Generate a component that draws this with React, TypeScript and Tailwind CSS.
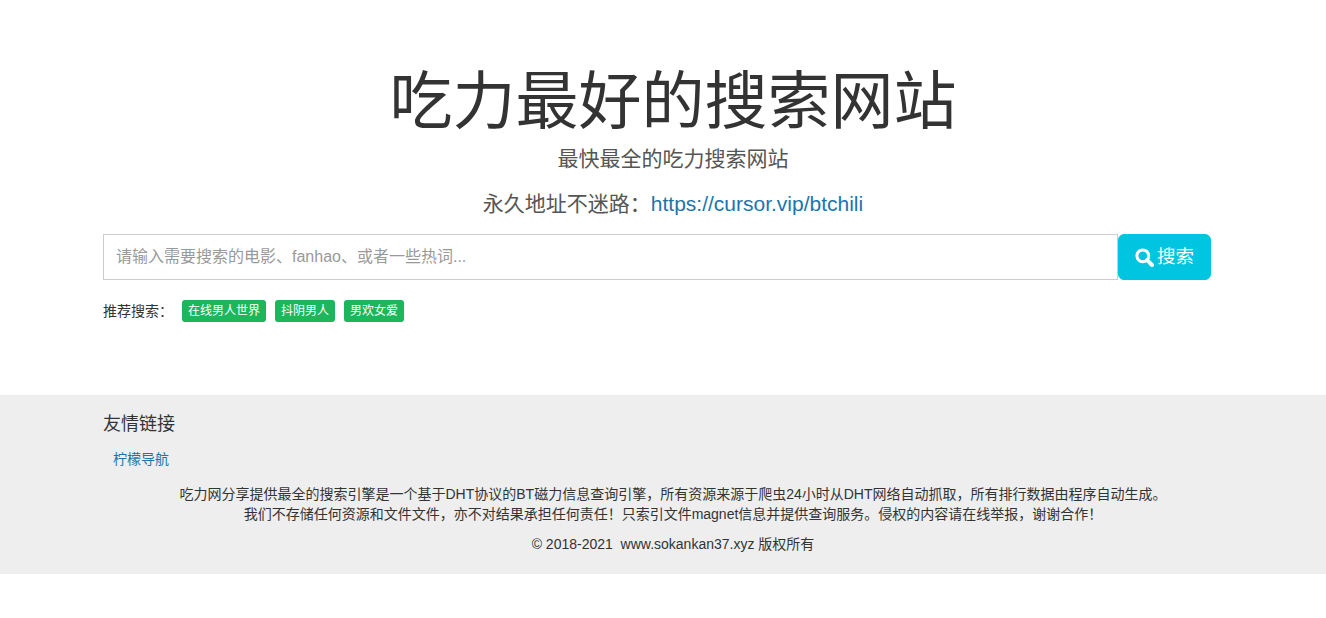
const tags = ['在线男人世界', '抖阴男人', '男欢女爱']

function SearchIcon() {
  return (
    <svg width="19" height="19" viewBox="0 0 19 19" fill="none" className="shrink-0">
      <circle cx="7.8" cy="7.8" r="5.9" stroke="white" strokeWidth="3" />
      <path d="M12.2 12.2L17 17" stroke="white" strokeWidth="4" strokeLinecap="round" />
    </svg>
  )
}

export default function App() {
  return (
    <div className="min-h-[618px] bg-white font-['Liberation_Sans','Noto_Sans_CJK_SC',sans-serif] text-[14px] text-[#333]">
      <div className="ml-[103px] w-[1140px]">
        <div className="pt-[63px] text-center">
          <h1 className="text-[63px] leading-[76px] font-normal">吃力最好的搜索网站</h1>
          <p className="mt-[3px] text-[21px] leading-[34px] text-[#555]">最快最全的吃力搜索网站</p>
          <p className="mt-[11px] text-[21px] leading-[34px] text-[#555]">
            永久地址不迷路：
            <a href="#" className="text-[#1b75ac]">https://cursor.vip/btchili</a>
          </p>
        </div>

        <div className="mt-[13px] flex h-[46px] w-[1108px]">
          <input
            placeholder="请输入需要搜索的电影、fanhao、或者一些热词..."
            className="h-full w-[1015px] border border-[#ccc] bg-white px-3 text-[16px] outline-none placeholder:text-[#999]"
          />
          <button className="flex h-full flex-1 items-center justify-center gap-[3px] rounded-md border border-[#00c5e0] bg-[#00c5e0] text-[18.5px] text-white">
            <SearchIcon />
            搜索
          </button>
        </div>

        <div className="mt-[20px] flex h-[22px] items-center">
          <span className="w-[79px] text-[14px] text-[#333]">推荐搜索：</span>
          <div className="flex gap-[9px]">
            {tags.map((tag) => (
              <a key={tag} href="#" className="rounded-[3px] bg-[#1cb65d] px-[6px] text-[12px] leading-[22px] text-white">
                {tag}
              </a>
            ))}
          </div>
        </div>
      </div>

      <div className="mt-[73px] h-[179px] bg-[#eee]">
        <div className="ml-[103px] w-[1140px] pt-[16px]">
          <h4 className="text-[18px] leading-[26px] font-normal">友情链接</h4>
          <a href="#" className="mt-[12px] ml-[10px] block text-[14px] leading-[20px] text-[#1b75ac]">柠檬导航</a>
          <div className="mt-[15px] text-center text-[14px] leading-[20px]">
            <p>吃力网分享提供最全的搜索引擎是一个基于DHT协议的BT磁力信息查询引擎，所有资源来源于爬虫24小时从DHT网络自动抓取，所有排行数据由程序自动生成。</p>
            <p>我们不存储任何资源和文件文件，亦不对结果承担任何责任！只索引文件magnet信息并提供查询服务。侵权的内容请在线举报，谢谢合作！</p>
            <p className="mt-[10px]">© 2018-2021&nbsp; www.sokankan37.xyz 版权所有</p>
          </div>
        </div>
      </div>
    </div>
  )
}
